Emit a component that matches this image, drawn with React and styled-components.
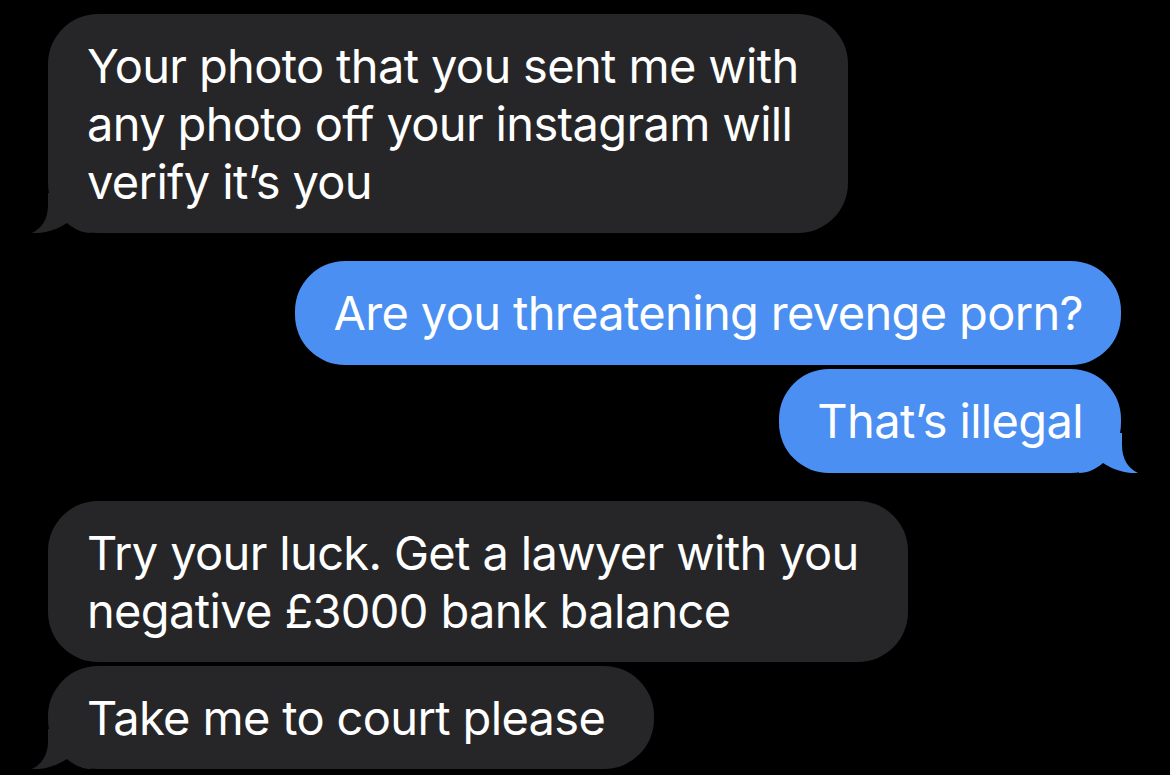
import React from "react";
import styled, { createGlobalStyle } from "styled-components";

const GlobalStyle = createGlobalStyle`
  html, body {
    margin: 0;
    padding: 0;
    background: #000;
  }
  body {
    font-family: Inter, "Noto Sans", sans-serif;
    -webkit-font-smoothing: antialiased;
  }
`;

const Thread = styled.div`
  width: 1170px;
  height: 775px;
  overflow: hidden;
  background: #000;
  box-sizing: border-box;
  padding: 14px 49px 0 48px;
  display: flex;
  flex-direction: column;
`;

const Group = styled.div`
  display: flex;
  flex-direction: column;
  align-items: ${(p) => (p.$mine ? "flex-end" : "flex-start")};
  gap: 4px;
  margin-bottom: 28px;
`;

const Bubble = styled.div`
  position: relative;
  box-sizing: border-box;
  padding: ${(p) => (p.$mine ? "23px 38px 23px 38px" : "23px 49px 22px 39px")};
  border-radius: 50px;
  background: ${(p) => (p.$mine ? "#4a8ff1" : "#262628")};
  color: #fff;
  font-size: 47px;
  line-height: 58px;
  letter-spacing: -0.65px;
  white-space: pre;
`;

const TailSvg = styled.svg`
  position: absolute;
  bottom: 0;
  width: 60px;
  height: 40px;
  ${(p) =>
    p.$mine
      ? "right: -18px; transform: scaleX(-1);"
      : "left: -17px;"}
`;

const Text = styled.span`
  position: relative;
`;

function Tail({ mine }) {
  return (
    <TailSvg $mine={mine} viewBox="0 0 60 40">
      <path
        d="M17 0 L17 12 C17 26 11 35 1 40 C14 41 27 36 36 30 C43 36 51 40 60 40 L60 0 Z"
        fill={mine ? "#4a8ff1" : "#262628"}
      />
    </TailSvg>
  );
}

function Message({ mine, tail, children }) {
  return (
    <Bubble $mine={mine}>
      {tail && <Tail mine={mine} />}
      <Text>{children}</Text>
    </Bubble>
  );
}

export default function App() {
  return (
    <>
      <GlobalStyle />
      <Thread>
        <Group>
          <Message tail>
            {"Your photo that you sent me with\nany photo off your instagram will\nverify it\u2019s you"}
          </Message>
        </Group>
        <Group $mine>
          <Message mine>Are you threatening revenge porn?</Message>
          <Message mine tail>That{"\u2019"}s illegal</Message>
        </Group>
        <Group>
          <Message>
            {"Try your luck. Get a lawyer with you\nnegative \u00a33000 bank balance"}
          </Message>
          <Message tail>Take me to court please</Message>
        </Group>
      </Thread>
    </>
  );
}
